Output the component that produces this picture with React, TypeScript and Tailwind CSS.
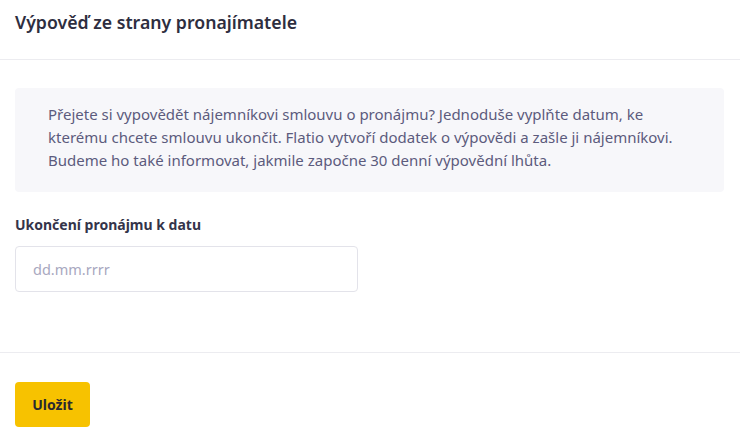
export default function App() {
  return (
    <div className="min-h-screen bg-white text-[#34344a]" style={{ fontFamily: "'Noto Sans', Lato, sans-serif" }}>
      {/* Header */}
      <div className="h-[60px] border-b border-[#ececf0] px-[15px] flex items-center">
        <h1 className="text-[17.7px] font-semibold text-[#2e2e40] -mt-[14px]">Výpověď ze strany pronajímatele</h1>
      </div>

      {/* Body */}
      <div className="h-[293px] border-b border-[#ececf0] px-[15px] pt-[28px]">
        <div className="w-[709px] h-[104px] rounded-[4px] bg-[#f7f7fa] pl-[33px] pr-4 pt-[15px]">
          <p className="text-[15px] leading-[23px] text-[#5c5b7d]">
            Přejete si vypovědět nájemníkovi smlouvu o pronájmu? Jednoduše vyplňte datum, ke
            <br />
            kterému chcete smlouvu ukončit. Flatio vytvoří dodatek o výpovědi a zašle ji nájemníkovi.
            <br />
            Budeme ho také informovat, jakmile započne 30 denní výpovědní lhůta.
          </p>
        </div>

        <label className="block mt-[22px] text-[14px] font-bold text-[#34344a]">Ukončení pronájmu k datu</label>
        <input
          type="text"
          placeholder="dd.mm.rrrr"
          className="mt-[11px] w-[343px] h-[46px] rounded-[4px] border border-[#e3e3ea] px-[17px] text-[14.5px] placeholder:text-[#a8a8c0] outline-none"
        />
      </div>

      {/* Footer */}
      <div className="px-[15px] pt-[29px]">
        <button className="w-[75px] h-[45px] rounded-[4px] bg-[#f7c200] text-[14px] font-bold text-[#2a2a30]">
          Uložit
        </button>
      </div>
    </div>
  )
}
